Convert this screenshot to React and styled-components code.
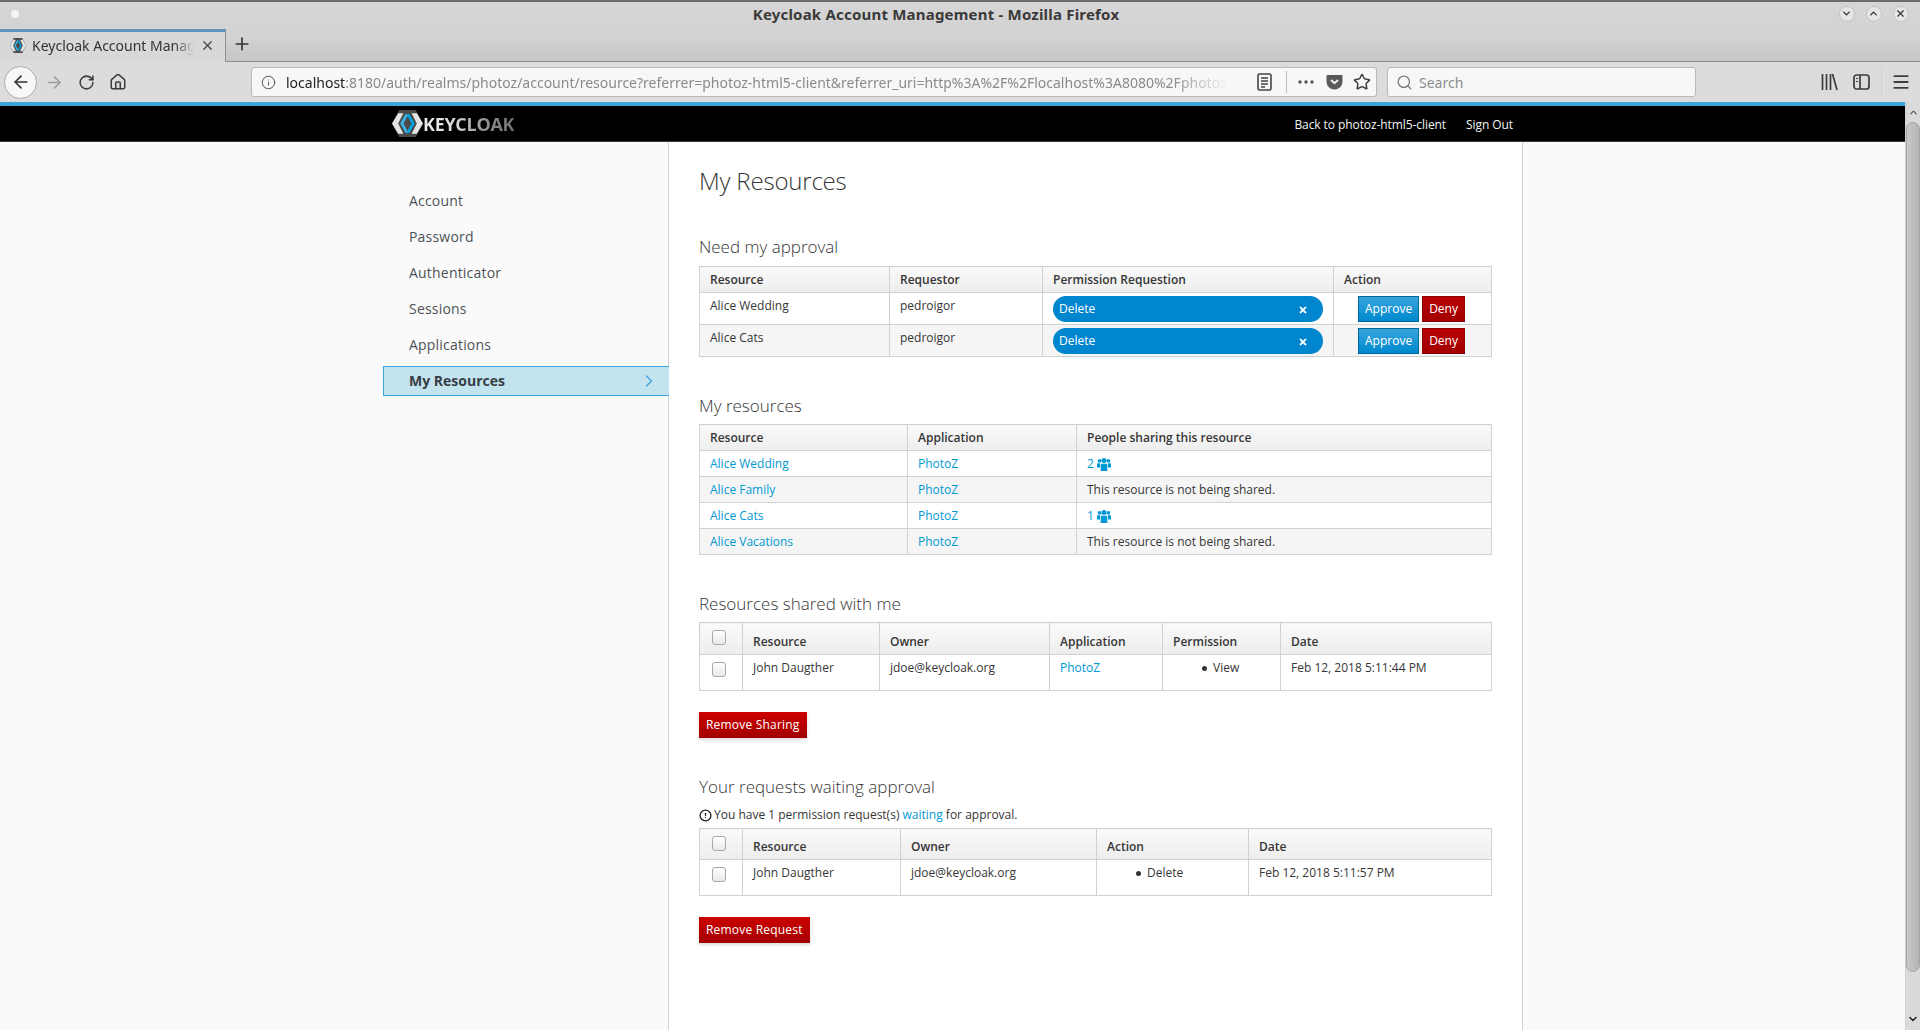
import React from 'react';
import styled, { createGlobalStyle } from 'styled-components';
import { ArrowLeft, ArrowRight, RotateCw, Home, Info, X, Plus, Star, Search, Menu, ChevronDown, ChevronUp, ChevronRight, CircleAlert } from 'lucide-react';
import { FaTimes } from 'react-icons/fa';

const GlobalStyle = createGlobalStyle`
  html, body {
    margin: 0;
    padding: 0;
    height: 100%;
    overflow: hidden;
    font-family: "Open Sans", "Liberation Sans", sans-serif;
  }
  * { box-sizing: border-box; }
`;

const Screen = styled.div`
  display: flex;
  flex-direction: column;
  width: 1920px;
  height: 1030px;
  overflow: hidden;
  background: #fafafa;
`;

/* window title + tab strip */
const Frame = styled.div`
  display: flex;
  flex-direction: column;
  height: 62px;
  border-top: 2px solid #6b6b6b;
  border-bottom: 1px solid #8e8e8e;
  background: linear-gradient(to bottom, #d6d6d6 0%, #d2d2d2 60%, #c6c6c6 100%);
`;
const TitleBar = styled.div`
  display: flex;
  align-items: center;
  justify-content: space-between;
  height: 27px;
  padding: 0 11px 3px 11px;
`;
const WinDot = styled.span`
  width: 8px;
  height: 8px;
  border-radius: 50%;
  background: #f4f4f4;
`;
const WinTitle = styled.div`
  font-family: "Noto Sans", sans-serif;
  font-size: 15px;
  font-weight: 700;
  color: #3a3a3a;
  letter-spacing: 0.2px;
  margin-left: 14px;
`;
const WinButtons = styled.div`
  display: flex;
  gap: 11px;
`;
const WinButton = styled.span`
  display: flex;
  align-items: center;
  justify-content: center;
  width: 16px;
  height: 16px;
  border-radius: 50%;
  background: #e6e6e6;
  border: 1px solid #c4c4c4;
  color: #333;
`;
const TabStrip = styled.div`
  display: flex;
  align-items: stretch;
  height: 33px;
`;
const Tab = styled.div`
  display: flex;
  align-items: center;
  width: 226px;
  margin-bottom: -1px;
  padding: 0 10px 2px 10px;
  gap: 6px;
  background: #d8d8d8;
  border-top: 3px solid #5e93c0;
  border-right: 1px solid #8e8e8e;
`;
const TabLabel = styled.span`
  flex: 1;
  overflow: hidden;
  white-space: nowrap;
  font-family: "Noto Sans", sans-serif;
  font-size: 14px;
  color: #333;
  mask-image: linear-gradient(to right, #000 88%, transparent 100%);
`;
const NewTab = styled.span`
  display: flex;
  align-items: center;
  margin-left: 6px;
  padding-bottom: 2px;
  color: #333;
`;

/* firefox toolbar */
const Toolbar = styled.div`
  display: flex;
  align-items: center;
  height: 40px;
  padding-left: 4px;
  background: #dcdcdc;
`;
const BackCircle = styled.span`
  display: flex;
  align-items: center;
  justify-content: center;
  width: 33px;
  height: 33px;
  border-radius: 50%;
  background: #f7f7f7;
  border: 1px solid #a9a9a9;
  color: #333;
`;
const ToolIcon = styled.span`
  display: flex;
  align-items: center;
  justify-content: center;
  width: ${(p) => p.$w || 32}px;
  color: ${(p) => p.$color || '#3d3d3d'};
`;
const NavIcons = styled.div`
  display: flex;
  align-items: center;
  margin-left: 1px;
  width: 213px;
`;
const UrlBar = styled.div`
  display: flex;
  align-items: center;
  width: 1126px;
  height: 30px;
  background: #f7f7f7;
  border: 1px solid #b9b9b9;
  border-radius: 3px;
`;
const UrlText = styled.div`
  width: 961px;
  margin-left: 1px;
  overflow: hidden;
  white-space: nowrap;
  font-family: "Noto Sans", sans-serif;
  font-size: 14px;
  color: #8a8a8a;
  mask-image: linear-gradient(to right, #000 92%, transparent 98%);
  b {
    font-weight: 400;
    color: #222;
  }
`;
const UrlDivider = styled.span`
  width: 1px;
  height: 22px;
  background: #bdbdbd;
  margin: 0 8px 0 5px;
`;
const SearchBox = styled.div`
  display: flex;
  align-items: center;
  width: 309px;
  height: 30px;
  margin-left: 10px;
  padding-left: 8px;
  gap: 6px;
  background: #f7f7f7;
  border: 1px solid #b9b9b9;
  border-radius: 3px;
  font-family: "Noto Sans", sans-serif;
  font-size: 14px;
  color: #8c8c8c;
`;
const ToolEnd = styled.div`
  display: flex;
  align-items: center;
  margin-left: 117px;
`;
const ToolSep = styled.span`
  width: 1px;
  height: 32px;
  background: #cfcfcf;
  margin: 0 4px;
`;

/* page inside the browser */
const Viewport = styled.div`
  flex: 1;
  display: flex;
  min-height: 0;
`;
const Page = styled.div`
  flex: 1;
  display: flex;
  flex-direction: column;
  min-width: 0;
  color: #363636;
  font-size: 12px;
  line-height: 20px;
`;
const Header = styled.header`
  display: flex;
  align-items: center;
  justify-content: space-between;
  height: 40px;
  padding: 2px 392px 0 392px;
  background: #000;
  border-top: 4px solid #39a5dc;
  border-bottom: 1px solid #3a3a3a;
`;
const LogoWrap = styled.div`
  display: flex;
  align-items: center;
  margin-top: -2px;
`;
const LogoWord = styled.span`
  font-size: 18px;
  font-weight: 700;
  line-height: 20px;
  letter-spacing: -0.3px;
  background: linear-gradient(to right, #ececec 0%, #dcdcdc 35%, #8f8f8f 70%, #6e6e6e 100%);
  -webkit-background-clip: text;
  background-clip: text;
  color: transparent;
`;
const HeaderLinks = styled.nav`
  display: flex;
  gap: 20px;
  color: #f5f5f5;
  letter-spacing: -0.08px;
`;
const Body = styled.div`
  flex: 1;
  display: flex;
  min-height: 0;
`;
const Sidebar = styled.aside`
  width: 669px;
  padding: 41px 0 0 383px;
  border-right: 1px solid #d1d1d1;
`;
const NavItem = styled.div`
  display: flex;
  align-items: center;
  justify-content: space-between;
  height: 36px;
  padding: 0 10px 0 26px;
  font-size: 14px;
  color: #4d5258;
  letter-spacing: 0.2px;
`;
const NavActive = styled(NavItem)`
  height: 30px;
  margin-top: 3px;
  padding-left: 25px;
  margin-right: -1px;
  font-weight: 700;
  letter-spacing: 0;
  background: #c3e3ef;
  border: 1px solid #39a5dc;
  border-right: none;
  color: #363e45;
`;
const Main = styled.main`
  width: 854px;
  padding: 0 30px;
  background: #fff;
  border-right: 1px solid #d1d1d1;
`;
const PageTitle = styled.h2`
  margin: 24px 0 0;
  height: 30px;
  font-size: 24px;
  line-height: 30px;
  font-weight: 300;
  letter-spacing: -0.2px;
  color: #363636;
`;
const SubTitle = styled.h3`
  margin: ${(p) => p.$top}px 0 ${(p) => p.$bottom || 8}px;
  height: 20px;
  font-size: 17px;
  line-height: 20px;
  font-weight: 300;
  color: #363636;
`;
const Note = styled.div`
  display: flex;
  align-items: center;
  gap: 2px;
  margin: 1px 0 3px;
  height: 20px;
`;
const DataTable = styled.table`
  width: 792px;
  table-layout: fixed;
  border-collapse: collapse;
  border: 1px solid #d1d1d1;
`;
const HeadRow = styled.tr`
  height: ${(p) => p.$h}px;
`;
const Row = styled.tr`
  height: ${(p) => p.$h}px;
  background: ${(p) => (p.$odd ? '#f5f5f5' : '#fff')};
`;
const Th = styled.th`
  padding: 0 10px 2px;
  text-align: left;
  font-weight: 600;
  vertical-align: bottom;
  border: 1px solid #d1d1d1;
  background: linear-gradient(to bottom, #fafafa 0%, #ededed 100%);
`;
const CheckTh = styled(Th)`
  padding: 7px 0 0;
  vertical-align: top;
`;
const Td = styled.td`
  padding: 3px 10px 0;
  vertical-align: top;
  border: 1px solid #d1d1d1;
  white-space: nowrap;
`;
const CheckTd = styled(Td)`
  padding: 7px 0 0;
`;
const ActionTd = styled(Td)`
  padding: 3px 0 0 ${(p) => p.$left}px;
`;
const Check = styled.input.attrs({ type: 'checkbox' })`
  appearance: none;
  display: block;
  width: 14px;
  height: 15px;
  margin: 0 0 0 12px;
  border: 1px solid #a8a8a8;
  border-radius: 3px;
  background: linear-gradient(to bottom, #fff, #e8e8e8);
`;
const Link = styled.a`
  color: #0099d3;
  text-decoration: none;
`;
const SharedCount = styled(Link)`
  display: inline-flex;
  align-items: center;
  gap: 3px;
`;
const Pill = styled.div`
  display: flex;
  align-items: center;
  justify-content: space-between;
  width: 270px;
  height: 26px;
  padding: 0 15px 0 6px;
  border-radius: 13px;
  background: #0085cf;
  color: #fff;
  svg {
    margin-top: 2px;
  }
`;
const ActionGroup = styled.div`
  display: flex;
  gap: 3px;
`;
const ApproveButton = styled.button`
  height: 26px;
  padding: 0 6px;
  font: inherit;
  color: #fff;
  border: 1px solid #00659c;
  background: linear-gradient(to bottom, #39a5dc 0%, #0088ce 100%);
`;
const DenyButton = styled.button`
  height: 26px;
  padding: 0 6px;
  font: inherit;
  color: #fff;
  border: 1px solid #8b0000;
  background: linear-gradient(to bottom, #b80000 0%, #a30000 100%);
`;
const DangerButton = styled.button`
  display: block;
  height: 26px;
  margin-top: 21px;
  padding: 0 7px;
  font: inherit;
  letter-spacing: 0.2px;
  color: #fff;
  border: none;
  background: linear-gradient(to bottom, #cc0000 0%, #a30000 100%);
  box-shadow: 0 2px 3px rgba(0, 0, 0, 0.15);
`;
const BulletList = styled.ul`
  margin: 0;
  padding: 0 0 0 29px;
  list-style: none;
`;
const BulletItem = styled.li`
  display: flex;
  align-items: center;
  gap: 6px;
  &::before {
    content: '';
    width: 5px;
    height: 5px;
    border-radius: 50%;
    background: #333;
  }
`;
const Filler = styled.div`
  flex: 1;
`;

/* gtk style scrollbar */
const ScrollBar = styled.div`
  display: flex;
  flex-direction: column;
  width: 15px;
  background: #dadada;
  border-left: 1px solid #cfcfcf;
`;
const ScrollArrow = styled.span`
  display: flex;
  align-items: center;
  justify-content: center;
  height: ${(p) => p.$h}px;
  color: #555;
`;
const ScrollThumb = styled.div`
  flex: 1;
  border-radius: 7px;
  border: 1px solid #a5a5a5;
  background: linear-gradient(to right, #c9c9c9, #b4b4b4);
`;
const ScrollTrack = styled.div`
  height: 36px;
`;

const KeycloakMark = ({ w = 31, h = 27 }) => (
  <svg width={w} height={h} viewBox="0 0 30 25" preserveAspectRatio="none">
    <polygon points="7,0 23,0 30,12.5 23,25 7,25 0,12.5" fill="#4a4a4a" />
    <polygon points="0,12.5 6,3 11,3 6,12.5 11,22 6,22" fill="#e4e4e4" />
    <polygon points="30,12.5 24,3 19,3 24,12.5 19,22 24,22" fill="#e4e4e4" />
    <polygon points="8,12.5 13,4 16,4 11,12.5 16,21 13,21" fill="#39b5e8" />
    <polygon points="22,12.5 17,4 14,4 19,12.5 14,21 17,21" fill="#00a4e0" />
  </svg>
);

const UsersIcon = () => (
  <svg width="14" height="13" viewBox="0 0 14 13" fill="currentColor">
    <circle cx="2.6" cy="2.8" r="1.9" />
    <circle cx="11.4" cy="2.8" r="1.9" />
    <circle cx="7" cy="2.6" r="2.5" />
    <path d="M0 6.2a1 1 0 0 1 1-1h2v4.3H0zM11 5.2h2a1 1 0 0 1 1 1v3.3h-3z" />
    <path d="M3.7 6.8a1 1 0 0 1 1-1h4.6a1 1 0 0 1 1 1V13H3.7z" />
  </svg>
);

const ReaderIcon = () => (
  <svg width="15" height="18" viewBox="0 0 15 18" fill="none" stroke="#444" strokeWidth="1.6">
    <rect x="1" y="1" width="13" height="16" rx="1.5" />
    <path d="M4 5h7M4 8h7M4 11h7M4 14h4" strokeWidth="1.3" />
  </svg>
);

const PocketIcon = () => (
  <svg width="17" height="16" viewBox="0 0 17 16">
    <path d="M1.5 1h14a1 1 0 0 1 1 1v5.5a8 8 0 0 1-16 0V2a1 1 0 0 1 1-1z" fill="#5a5a5a" />
    <path d="M5 6l3.5 3.2L12 6" fill="none" stroke="#eee" strokeWidth="2" />
  </svg>
);

const LibraryIcon = () => (
  <svg width="17" height="18" viewBox="0 0 17 18" fill="none" stroke="#3d3d3d" strokeWidth="1.7">
    <path d="M1.5 1v16M5.5 1v16M9.5 1v16M11.5 1l4.5 16" />
  </svg>
);

const SidebarIcon = () => (
  <svg width="17" height="16" viewBox="0 0 17 16" fill="none" stroke="#3d3d3d" strokeWidth="1.7">
    <rect x="1" y="1" width="15" height="14" rx="2.5" />
    <path d="M7 1v14" />
    <path d="M3 4.5h2M3 7.5h2" strokeWidth="1.2" />
  </svg>
);

const DotsIcon = () => (
  <svg width="16" height="4" viewBox="0 0 16 4" fill="#555">
    <circle cx="2" cy="2" r="1.7" />
    <circle cx="8" cy="2" r="1.7" />
    <circle cx="14" cy="2" r="1.7" />
  </svg>
);

const BrowserChrome = () => (
  <>
    <Frame>
      <TitleBar>
        <WinDot />
        <WinTitle>Keycloak Account Management - Mozilla Firefox</WinTitle>
        <WinButtons>
          <WinButton><ChevronDown size={11} strokeWidth={3} /></WinButton>
          <WinButton><ChevronUp size={11} strokeWidth={3} /></WinButton>
          <WinButton><X size={11} strokeWidth={2.5} /></WinButton>
        </WinButtons>
      </TitleBar>
      <TabStrip>
        <Tab>
          <KeycloakMark w={16} h={15} />
          <TabLabel>Keycloak Account Management</TabLabel>
          <X size={15} color="#444" strokeWidth={2} />
        </Tab>
        <NewTab><Plus size={20} strokeWidth={2} /></NewTab>
      </TabStrip>
    </Frame>
    <Toolbar>
      <BackCircle><ArrowLeft size={20} strokeWidth={2} /></BackCircle>
      <NavIcons>
        <ToolIcon $color="#9b9b9b"><ArrowRight size={19} strokeWidth={2} /></ToolIcon>
        <ToolIcon><RotateCw size={17} strokeWidth={2.2} /></ToolIcon>
        <ToolIcon><Home size={18} strokeWidth={2} /></ToolIcon>
      </NavIcons>
      <UrlBar>
        <ToolIcon $w={33} $color="#555"><Info size={15} strokeWidth={1.6} /></ToolIcon>
        <UrlText>
          <b>localhost</b>:8180/auth/realms/photoz/account/resource?referrer=photoz-html5-client&amp;referrer_uri=http%3A%2F%2Flocalhost%3A8080%2Fphotoz-html5-client
        </UrlText>
        <ToolIcon $w={34}><ReaderIcon /></ToolIcon>
        <UrlDivider />
        <ToolIcon $w={22}><DotsIcon /></ToolIcon>
        <ToolIcon $w={34}><PocketIcon /></ToolIcon>
        <ToolIcon $w={22}><Star size={18} strokeWidth={2} /></ToolIcon>
      </UrlBar>
      <SearchBox>
        <Search size={17} color="#777" strokeWidth={1.8} />
        Search
      </SearchBox>
      <ToolEnd>
        <ToolIcon><LibraryIcon /></ToolIcon>
        <ToolIcon><SidebarIcon /></ToolIcon>
        <ToolSep />
        <ToolIcon $w={30}><Menu size={20} strokeWidth={2.2} /></ToolIcon>
      </ToolEnd>
    </Toolbar>
  </>
);

const navItems = ['Account', 'Password', 'Authenticator', 'Sessions', 'Applications'];

const approvals = [
  { name: 'Alice Wedding', by: 'pedroigor' },
  { name: 'Alice Cats', by: 'pedroigor' },
];

const resources = [
  { name: 'Alice Wedding', shared: 2 },
  { name: 'Alice Family' },
  { name: 'Alice Cats', shared: 1 },
  { name: 'Alice Vacations' },
];

const Cols = ({ widths }) => (
  <colgroup>
    {widths.map((w, i) => <col key={i} width={w} />)}
  </colgroup>
);

export default function App() {
  return (
    <Screen>
      <GlobalStyle />
      <BrowserChrome />
      <Viewport>
        <Page>
          <Header>
            <LogoWrap>
              <KeycloakMark />
              <LogoWord>KEYCLOAK</LogoWord>
            </LogoWrap>
            <HeaderLinks>
              <span>Back to photoz-html5-client</span>
              <span>Sign Out</span>
            </HeaderLinks>
          </Header>
          <Body>
            <Sidebar>
              {navItems.map((n) => <NavItem key={n}>{n}</NavItem>)}
              <NavActive>
                My Resources
                <ChevronRight size={20} color="#39a5dc" strokeWidth={1.5} />
              </NavActive>
            </Sidebar>
            <Main>
              <PageTitle>My Resources</PageTitle>

              <SubTitle $top={41} $bottom={9}>Need my approval</SubTitle>
              <DataTable>
                <Cols widths={[190, 153, 291, 158]} />
                <thead>
                  <HeadRow $h={26}>
                    <Th>Resource</Th>
                    <Th>Requestor</Th>
                    <Th>Permission Requestion</Th>
                    <Th>Action</Th>
                  </HeadRow>
                </thead>
                <tbody>
                  {approvals.map((a, i) => (
                    <Row key={a.name} $h={32} $odd={i % 2 === 1}>
                      <Td>{a.name}</Td>
                      <Td>{a.by}</Td>
                      <ActionTd $left={10}>
                        <Pill>
                          Delete
                          <FaTimes size={10} />
                        </Pill>
                      </ActionTd>
                      <ActionTd $left={24}>
                        <ActionGroup>
                          <ApproveButton>Approve</ApproveButton>
                          <DenyButton>Deny</DenyButton>
                        </ActionGroup>
                      </ActionTd>
                    </Row>
                  ))}
                </tbody>
              </DataTable>

              <SubTitle $top={39}>My resources</SubTitle>
              <DataTable>
                <Cols widths={[208, 169, 415]} />
                <thead>
                  <HeadRow $h={26}>
                    <Th>Resource</Th>
                    <Th>Application</Th>
                    <Th>People sharing this resource</Th>
                  </HeadRow>
                </thead>
                <tbody>
                  {resources.map((r, i) => (
                    <Row key={r.name} $h={26} $odd={i % 2 === 1}>
                      <Td><Link>{r.name}</Link></Td>
                      <Td><Link>PhotoZ</Link></Td>
                      <Td>
                        {r.shared
                          ? <SharedCount>{r.shared} <UsersIcon /></SharedCount>
                          : 'This resource is not being shared.'}
                      </Td>
                    </Row>
                  ))}
                </tbody>
              </DataTable>

              <SubTitle $top={39}>Resources shared with me</SubTitle>
              <DataTable>
                <Cols widths={[43, 137, 170, 113, 118, 211]} />
                <thead>
                  <HeadRow $h={32}>
                    <CheckTh><Check /></CheckTh>
                    <Th>Resource</Th>
                    <Th>Owner</Th>
                    <Th>Application</Th>
                    <Th>Permission</Th>
                    <Th>Date</Th>
                  </HeadRow>
                </thead>
                <tbody>
                  <Row $h={36}>
                    <CheckTd><Check /></CheckTd>
                    <Td>John Daugther</Td>
                    <Td>jdoe@keycloak.org</Td>
                    <Td><Link>PhotoZ</Link></Td>
                    <Td><BulletList><BulletItem>View</BulletItem></BulletList></Td>
                    <Td>Feb 12, 2018 5:11:44 PM</Td>
                  </Row>
                </tbody>
              </DataTable>
              <DangerButton>Remove Sharing</DangerButton>

              <SubTitle $top={39}>Your requests waiting approval</SubTitle>
              <Note>
                <CircleAlert size={13} strokeWidth={2.4} color="#222" />
                <span>You have 1 permission request(s) <Link>waiting</Link> for approval.</span>
              </Note>
              <DataTable>
                <Cols widths={[43, 158, 196, 152, 243]} />
                <thead>
                  <HeadRow $h={31}>
                    <CheckTh><Check /></CheckTh>
                    <Th>Resource</Th>
                    <Th>Owner</Th>
                    <Th>Action</Th>
                    <Th>Date</Th>
                  </HeadRow>
                </thead>
                <tbody>
                  <Row $h={36}>
                    <CheckTd><Check /></CheckTd>
                    <Td>John Daugther</Td>
                    <Td>jdoe@keycloak.org</Td>
                    <Td><BulletList><BulletItem>Delete</BulletItem></BulletList></Td>
                    <Td>Feb 12, 2018 5:11:57 PM</Td>
                  </Row>
                </tbody>
              </DataTable>
              <DangerButton>Remove Request</DangerButton>
            </Main>
            <Filler />
          </Body>
        </Page>
        <ScrollBar>
          <ScrollArrow $h={20}><ChevronUp size={11} strokeWidth={2.5} /></ScrollArrow>
          <ScrollThumb />
          <ScrollTrack />
          <ScrollArrow $h={22}><ChevronDown size={12} strokeWidth={3} color="#222" /></ScrollArrow>
        </ScrollBar>
      </Viewport>
    </Screen>
  );
}
